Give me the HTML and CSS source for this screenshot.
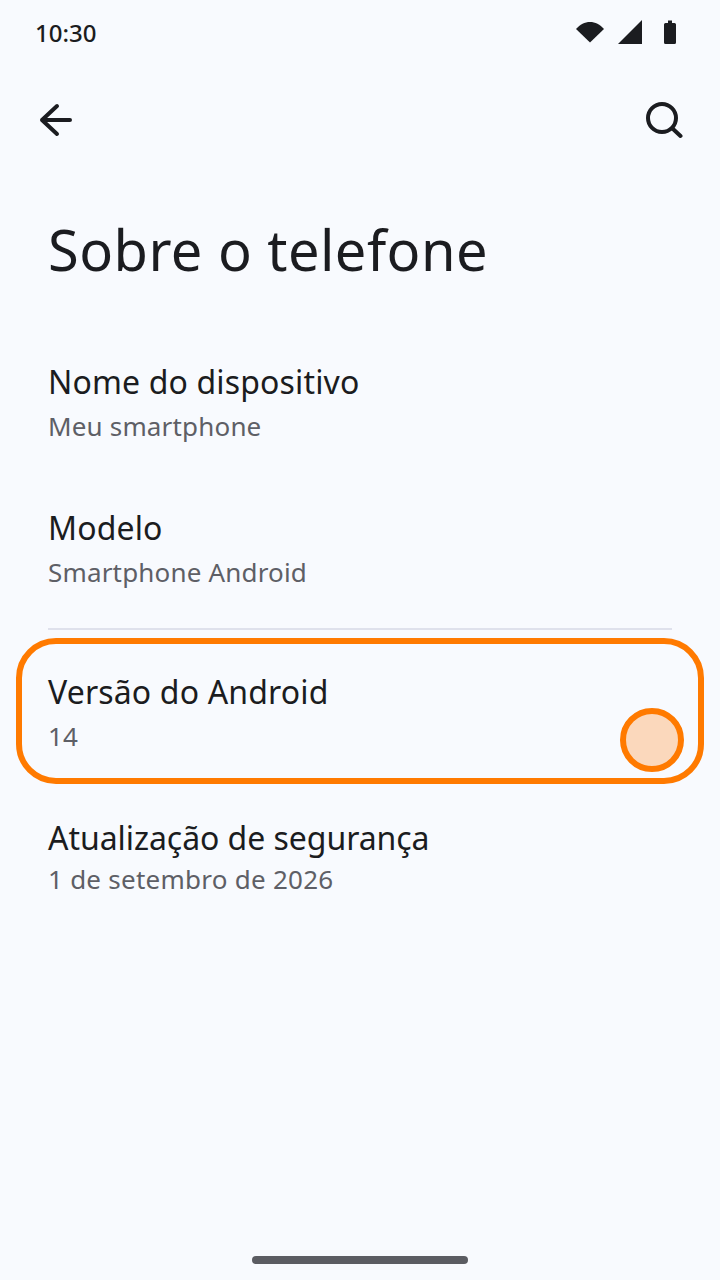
FILE: index.html
```html
<!DOCTYPE html>
<html lang="pt">
<head>
    <meta charset="UTF-8">
    <meta name="viewport" content="width=device-width, initial-scale=1.0">
    <title>Sobre o telefone</title>
    <link rel="stylesheet" href="styles.css">
</head>
<body>
    <div class="screen">
        <div class="status-bar">
            <span class="clock">10:30</span>
            <div class="status-icons">
                <svg class="wifi" width="28" height="24" viewBox="0 0 28 24"><path d="M0 9C4 4.500 8.800 2 14 2S24 4.500 28 9L14 22.500Z" fill="#1b1c20"/></svg>
                <svg class="signal" width="24" height="24" viewBox="0 0 24 24"><path d="M24 0V24H0Z" fill="#1b1c20"/></svg>
                <svg class="battery" width="12" height="24" viewBox="0 0 12 24"><path d="M4 0.500H8V3H10.500Q12 3 12 4.500V22.500Q12 24 10.500 24H1.500Q0 24 0 22.500V4.500Q0 3 1.500 3H4Z" fill="#1b1c20"/></svg>
            </div>
        </div>

        <div class="app-bar">
            <svg width="36" height="36" viewBox="0 0 36 36" fill="none" stroke="#1b1c20" stroke-width="4" stroke-linecap="round" stroke-linejoin="round"><path d="M32 18H4M19 4L4 18L19 32"/></svg>
            <svg width="38" height="38" viewBox="0 0 38 38" fill="none" stroke="#1b1c20" stroke-width="4" stroke-linecap="round"><circle cx="17" cy="17" r="14"/><path d="M27.500 27.500L35.500 35"/></svg>
        </div>

        <h1 class="title">Sobre o telefone</h1>

        <div class="group">
            <div class="row">
                <div class="row-title">Nome do dispositivo</div>
                <div class="row-sub">Meu smartphone</div>
            </div>
            <div class="row">
                <div class="row-title">Modelo</div>
                <div class="row-sub">Smartphone Android</div>
            </div>
        </div>

        <div class="divider"></div>

        <div class="group">
            <div class="row">
                <div class="row-title">Versão do Android</div>
                <div class="row-sub">14</div>
                <div class="highlight"></div>
                <div class="touch-dot"></div>
            </div>
            <div class="row row-tight">
                <div class="row-title">Atualização de segurança</div>
                <div class="row-sub">1 de setembro de 2026</div>
            </div>
        </div>

        <div class="home-bar"></div>
    </div>
</body>
</html>
```

FILE: styles.css
```css
* {
    margin: 0;
    padding: 0;
    box-sizing: border-box;
}

body {
    background: #f8fafe;
    font-family: "Noto Sans", sans-serif;
    color: #1b1c20;
    overflow: hidden;
}

.screen {
    position: relative;
    width: 720px;
    height: 1280px;
    display: flex;
    flex-direction: column;
}

.status-bar {
    height: 66px;
    padding: 0 44px 0 35px;
    display: flex;
    justify-content: space-between;
    align-items: center;
}

.clock {
    font-size: 24px;
    font-weight: 500;
    line-height: 32px;
}

.status-icons {
    display: flex;
    align-items: center;
    margin-top: -2px;
}

.signal {
    margin: 0 22px 0 14px;
}

.app-bar {
    height: 108px;
    padding: 0 37px 0 38px;
    display: flex;
    justify-content: space-between;
    align-items: center;
}

.title {
    margin: 35px 0 70px;
    padding-left: 48px;
    font-size: 56px;
    font-weight: 400;
    line-height: 80px;
    letter-spacing: 0.45px;
}

.group {
    display: flex;
    flex-direction: column;
    gap: 59px;
}

.row {
    position: relative;
    padding: 0 48px;
}

.row-title {
    font-size: 32px;
    line-height: 46px;
    letter-spacing: 0.15px;
}

.row-sub {
    margin-top: 1px;
    font-size: 26px;
    line-height: 40px;
    letter-spacing: 0.17px;
    color: #5e5f66;
}

/* last row sits a little tighter than the others */
.row-tight .row-title {
    letter-spacing: -0.05px;
}

.row-tight .row-sub {
    margin-top: -2px;
    letter-spacing: 0.25px;
}

.divider {
    flex: none;
    height: 2px;
    margin: 36px 48px 39px;
    background: #dfe1ec;
}

.highlight {
    position: absolute;
    left: 16px;
    right: 16px;
    top: -31px;
    bottom: -28px;
    border: 6px solid #ff7a00;
    border-radius: 40px;
}

.touch-dot {
    position: absolute;
    right: 36px;
    top: 39px;
    width: 64px;
    height: 64px;
    border: 6px solid #ff7a00;
    border-radius: 50%;
    background: #fbd8bc;
}

.home-bar {
    position: absolute;
    left: 252px;
    bottom: 16px;
    width: 216px;
    height: 8px;
    border-radius: 4px;
    background: #5b5c62;
}
```
